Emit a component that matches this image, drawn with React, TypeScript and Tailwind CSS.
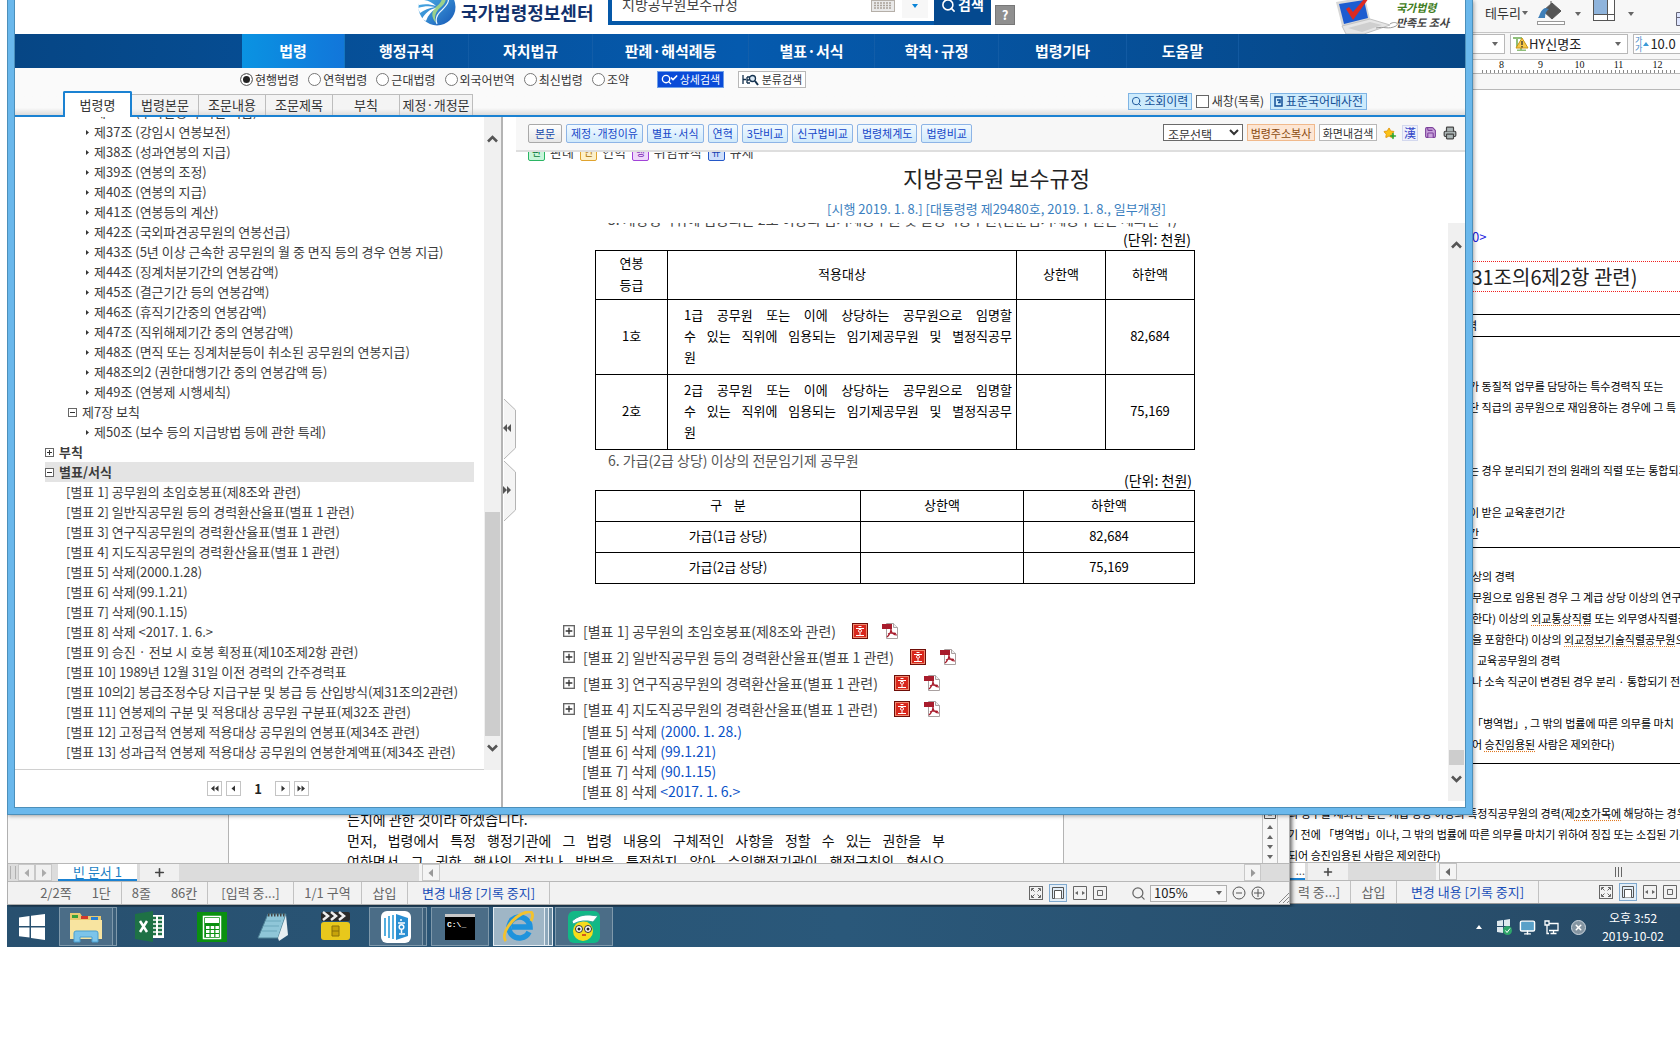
import type { ReactNode } from 'react'
import { Search, Printer, Save, Star, Plus, Check, X, Monitor } from 'lucide-react'

const navItems = [
  { label: '법령', cls: 'w-[103px] bg-linear-to-r from-[#0a93e2] to-[#1276da]' },
  { label: '행정규칙', cls: 'w-[124px]' },
  { label: '자치법규', cls: 'w-[124px]' },
  { label: '판례·해석례등', cls: 'w-[156px]' },
  { label: '별표·서식', cls: 'w-[126px]' },
  { label: '학칙·규정', cls: 'w-[124px]' },
  { label: '법령기타', cls: 'w-[128px]' },
  { label: '도움말', cls: 'w-[112px]' },
]

const scopes = ['현행법령', '연혁법령', '근대법령', '외국어번역', '최신법령', '조약']

const tabs = ['법령본문', '조문내용', '조문제목', '부칙', '제정·개정문']

const articles = [
  '제37조 (강임시 연봉보전)',
  '제38조 (성과연봉의 지급)',
  '제39조 (연봉의 조정)',
  '제40조 (연봉의 지급)',
  '제41조 (연봉등의 계산)',
  '제42조 (국외파견공무원의 연봉선급)',
  '제43조 (5년 이상 근속한 공무원의 월 중 면직 등의 경우 연봉 지급)',
  '제44조 (징계처분기간의 연봉감액)',
  '제45조 (결근기간 등의 연봉감액)',
  '제46조 (휴직기간중의 연봉감액)',
  '제47조 (직위해제기간 중의 연봉감액)',
  '제48조 (면직 또는 징계처분등이 취소된 공무원의 연봉지급)',
  '제48조의2 (권한대행기간 중의 연봉감액 등)',
  '제49조 (연봉제 시행세칙)',
]

const appendices = [
  '[별표 1] 공무원의 초임호봉표(제8조와 관련)',
  '[별표 2] 일반직공무원 등의 경력환산율표(별표 1 관련)',
  '[별표 3] 연구직공무원의 경력환산율표(별표 1 관련)',
  '[별표 4] 지도직공무원의 경력환산율표(별표 1 관련)',
  '[별표 5] 삭제(2000.1.28)',
  '[별표 6] 삭제(99.1.21)',
  '[별표 7] 삭제(90.1.15)',
  '[별표 8] 삭제 <2017. 1. 6.>',
  '[별표 9] 승진 · 전보 시 호봉 획정표(제10조제2항 관련)',
  '[별표 10] 1989년 12월 31일 이전 경력의 간주경력표',
  '[별표 10의2] 봉급조정수당 지급구분 및 봉급 등 산입방식(제31조의2관련)',
  '[별표 11] 연봉제의 구분 및 적용대상 공무원 구분표(제32조 관련)',
  '[별표 12] 고정급적 연봉제 적용대상 공무원의 연봉표(제34조 관련)',
  '[별표 13] 성과급적 연봉제 적용대상 공무원의 연봉한계액표(제34조 관련)',
]

const deleted = [
  { name: '[별표 5] 삭제', date: '(2000. 1. 28.)' },
  { name: '[별표 6] 삭제', date: '(99.1.21)' },
  { name: '[별표 7] 삭제', date: '(90.1.15)' },
  { name: '[별표 8] 삭제', date: '<2017. 1. 6.>' },
]

const lawButtons = ['제정·개정이유', '별표·서식', '연혁', '3단비교', '신구법비교', '법령체계도', '법령비교']

const legend = [
  { mark: '판', text: '판례', cls: 'border-[#2bb564] bg-[#c9f5da] text-[#0d7a3a]' },
  { mark: '연', text: '연혁', cls: 'border-[#e0a32e] bg-[#fdf0c8] text-[#a86c00]' },
  { mark: '행', text: '위임규칙', cls: 'border-[#a143d8] bg-[#eed8fb] text-[#7a1fb0]' },
  { mark: '규', text: '규제', cls: 'border-[#2458c8] bg-[#cfdffb] text-[#1440b0]' },
]

/* ---------- small shared pieces ---------- */

function TreeBox({ open, size = 9 }: { open?: boolean; size?: number }) {
  return (
    <svg width={size} height={size} viewBox="0 0 9 9" className="shrink-0">
      <rect x="0.5" y="0.5" width="8" height="8" fill="#fff" stroke="#666" />
      <path d={open ? 'M2 4.5h5' : 'M2 4.5h5M4.5 2v5'} stroke="#333" />
    </svg>
  )
}

function Chevron({ down }: { down?: boolean }) {
  return (
    <svg width="11" height="9" viewBox="0 0 11 9" className="shrink-0">
      <path d={down ? 'M1 1.5L5.500 6L10 1.500' : 'M1 7.500L5.500 3L10 7.500'} fill="none" stroke="#555" strokeWidth="2.600" />
    </svg>
  )
}

function Tri({ dir, color = '#666' }: { dir: 'left' | 'right' | 'up' | 'down'; color?: string }) {
  const d = { left: 'M6 0v8L1.500 4z', right: 'M2 0v8l4.500-4z', up: 'M1 6h6L4 2z', down: 'M1 2h6L4 6z' }[dir]
  return (
    <svg width="8" height="8" viewBox="0 0 8 8" className="shrink-0">
      <path d={d} fill={color} />
    </svg>
  )
}

function PageButton({ label, d }: { label: string; d: string }) {
  return (
    <button aria-label={label} className="flex h-[15px] w-[15px] items-center justify-center border border-[#c4c4c4] bg-white">
      <svg width="9" height="7" viewBox="0 0 9 7">
        <path d={d} fill="#333" />
      </svg>
    </button>
  )
}

/* ---------- browser: header ---------- */

function SiteHeader() {
  return (
    <header className="flex h-[34px] items-end overflow-hidden pl-[403px]">
      <svg width="38" height="38" viewBox="0 0 38 38" className="mb-[8px] shrink-0">
        <defs>
          <linearGradient id="globe" x1="0" y1="0" x2="1" y2="1">
            <stop offset="0" stopColor="#56c0f0" />
            <stop offset="1" stopColor="#1556b4" />
          </linearGradient>
        </defs>
        <circle cx="19" cy="19" r="18.500" fill="url(#globe)" />
        <path d="M23 0c8 8 5 15 0 19c-6 5-7 10-5 16c-6-7-4-13 1-17c5-4 7-9 4-18z" fill="#9bd08a" />
        <path d="M0 12c8-1 14 2 18 6c-6-2-12-2-17-1zM0 20c6-2 12-2 17-1c-6 1-11 3-15 6zM4 31c3-6 8-10 14-11c-4 3-8 7-10 13z" fill="#fff" />
        <path d="M27 4c7 8 2 13-3 18c-6 5-7 9-5 14" fill="none" stroke="#eaf6ff" strokeWidth="1.200" />
      </svg>
      <span className="mb-[10px] ml-[5px] w-[142px] shrink-0 text-[18px] leading-[24px] font-bold text-[#12316c]">국가법령정보센터</span>
      <div className="mb-[9px] ml-[5px] flex h-[40px] w-[383px] shrink-0 items-stretch border-4 border-r-0 border-[#0558a8] bg-white">
        <input
          aria-label="검색어"
          defaultValue="지방공무원보수규정"
          className="w-[250px] pb-[2px] pl-[10px] text-[14px] text-[#444] outline-none"
        />
        <div className="flex flex-1 items-end pb-[9px] pl-[9px]">
          <svg width="24" height="12" viewBox="0 0 24 12">
            <rect x="0.500" y="0.500" width="23" height="11" fill="#e9e9e9" stroke="#b5afa8" />
            <path d="M3 3h18M3 5.500h18M3 8h18" stroke="#aaa39a" strokeWidth="1.500" strokeDasharray="2 1" />
          </svg>
        </div>
        <button aria-label="자동완성" className="mb-[3px] flex w-[26px] items-end justify-center bg-[#f7f7f7] pb-[8px]">
          <Tri dir="down" color="#0a84d8" />
        </button>
        <button className="-mb-1 ml-[6px] flex w-[57px] items-end justify-center gap-[2px] bg-[#04498f] pb-[12px] text-[14px] leading-[18px] font-bold text-white">
          <Search size={15} strokeWidth={2.500} />
          검색
        </button>
      </div>
      <button className="mb-[9px] ml-[4px] h-[20px] w-[20px] border border-[#777] bg-[#8f8f8f] text-[13px] leading-[18px] font-bold text-white">?</button>
      <div className="mr-[15px] ml-auto flex items-end">
        <svg width="66" height="44" viewBox="0 0 66 44" className="shrink-0">
          <path d="M2 12l29-5l5 22l-28 7z" fill="#d8d8d8" />
          <path d="M5 14l25-4l4 18l-24 6z" fill="#1d5cd0" />
          <path d="M8 36l28-7l20 6l-26 9H12z" fill="#e6e6e6" stroke="#c2c2c2" />
          <path d="M14 38l22-6l12 3l-20 7z" fill="#cfcfcf" />
          <path d="M12 19l7 11l16-22l-4 0l-12 14l-4-5z" fill="#dd2a22" />
          <path d="M42 38c8-2 12 2 20-2c4-3-2-5-6-2" fill="none" stroke="#9a9a9a" />
        </svg>
        <div className="mb-[4px] -ml-[4px] w-[54px] text-[11px] leading-[15px] font-bold italic">
          <div className="text-[#3f7d22]">국가법령</div>
          <div className="whitespace-nowrap text-[#444]">만족도 조사</div>
        </div>
      </div>
    </header>
  )
}

function SiteNav() {
  return (
    <nav className="flex h-[34px] bg-linear-to-r from-[#064685] via-[#055aae] to-[#064685] pl-[227px]">
      {navItems.map((item) => (
        <a
          key={item.label}
          href="#"
          className={`${item.cls} flex items-center justify-center border-r border-[#1a62aa]/60 text-[15px] font-bold text-white`}
        >
          {item.label}
        </a>
      ))}
    </nav>
  )
}

function SearchScope() {
  return (
    <div className="bg-[#fafafa]">
      <div className="flex h-[23px] items-center pl-[225px] text-[12px] text-[#333]">
        <div className="flex gap-[9px]">
          {scopes.map((s, i) => (
            <label key={s} className="flex items-center gap-[2px]">
              <input
                type="radio"
                name="scope"
                defaultChecked={i === 0}
                className="h-[13px] w-[13px] appearance-none rounded-full border border-[#777] bg-white checked:bg-[#222] checked:shadow-[inset_0_0_0_2px_#fff]"
              />
              {s}
            </label>
          ))}
        </div>
        <button className="ml-[28px] flex h-[17px] w-[67px] items-center justify-center gap-[2px] border border-[#6fa0e8] bg-[#0a4bd8] text-[11px] text-white">
          <Search size={11} strokeWidth={3} />
          <Check size={8} strokeWidth={5} className="-ml-[4px] mb-[4px]" />
          상세검색
        </button>
        <button className="ml-[14px] flex h-[17px] w-[68px] items-center justify-center gap-[3px] border border-[#b8b8b8] bg-white text-[11px]">
          <svg width="17" height="12" viewBox="0 0 17 12" fill="none" stroke="#14324f" strokeWidth="1.300">
            <path d="M1 1v9M1 5.500h3M5 3v6M5 3h3M5 6h2M5 9h3" />
            <circle cx="10.500" cy="4.500" r="3" fill="#dbe9f5" />
            <path d="M13 7l3 4" strokeWidth="2" />
          </svg>
          분류검색
        </button>
      </div>
      <div className="flex h-[26px] items-end border-b-2 border-[#1b82d2] bg-linear-to-b from-[#fafafa] from-70% to-[#dcdcdc] pl-[48px] text-[13px] text-[#333]">
        <button className="-mb-[2px] h-[26px] w-[69px] rounded-t-[2px] border-2 border-b-0 border-[#1b82d2] bg-white">법령명</button>
        {tabs.map((t) => (
          <button key={t} className="h-[21px] w-[67px] border border-b-0 border-l-0 border-[#bdbdbd] bg-linear-to-b from-[#f4f4f4] from-70% to-[#dedede] leading-[18px] whitespace-nowrap last-of-type:w-[73px]">
            {t}
          </button>
        ))}
        <div className="mr-[98px] mb-[5px] ml-auto flex items-center gap-[4px] text-[12px]">
          <button className="flex h-[17px] w-[64px] items-center justify-center gap-[2px] border border-[#7fb4e4] bg-[#cdebfc] text-[#134f96]">
            <Search size={11} />
            조회이력
          </button>
          <label className="flex items-center gap-[3px]">
            <input type="checkbox" className="h-[13px] w-[13px] appearance-none border border-[#666] bg-white" />
            새창(목록)
          </label>
          <button className="ml-[2px] flex h-[17px] w-[97px] items-center justify-center gap-[3px] border border-[#7fb4e4] bg-[#cdebfc] text-[#134f96]">
            <svg width="9" height="11" viewBox="0 0 9 11" fill="none" stroke="#134f96" strokeWidth="1.500">
              <path d="M1 1h7v9H1zM3 4h3v2.500H4" />
            </svg>
            표준국어대사전
          </button>
        </div>
      </div>
    </div>
  )
}

/* ---------- browser: article tree ---------- */

function ArticleRow({ text }: { text: string }) {
  return (
    <li className="flex h-[20px] shrink-0 items-center gap-[5px] pl-[71px] whitespace-nowrap">
      <svg width="3" height="5" viewBox="0 0 3 5" className="shrink-0">
        <path d="M0 0l3 2.500l-3 2.500z" fill="#333" />
      </svg>
      <a href="#">{text}</a>
    </li>
  )
}

function LawTree() {
  return (
    <aside className="flex w-[488px] shrink-0 flex-col border-r-2 border-[#b4b4b4] text-[13px] text-[#3c3c3c]">
      <div className="flex min-h-0 flex-1">
        <ul className="flex min-w-0 flex-1 flex-col justify-end overflow-hidden border-b border-[#d0d0d0] pb-[7px] leading-[20px]">
          <ArticleRow text="제36조 (수사관등의 의한 지급)" />
          {articles.map((a) => <ArticleRow key={a} text={a} />)}
          <li className="flex h-[20px] shrink-0 items-center gap-[5px] pl-[53px]"><TreeBox open />제7장 보칙</li>
          <ArticleRow text="제50조 (보수 등의 지급방법 등에 관한 특례)" />
          <li className="flex h-[20px] shrink-0 items-center gap-[5px] pl-[30px] font-bold"><TreeBox />부칙</li>
          <li className="mr-[10px] ml-[30px] flex h-[20px] shrink-0 items-center gap-[5px] bg-[#e4e4e4] font-bold"><TreeBox open />별표/서식</li>
          {appendices.map((a) => (
            <li key={a} className="h-[20px] shrink-0 pl-[51px] whitespace-nowrap"><a href="#">{a}</a></li>
          ))}
        </ul>
        <div className="flex w-[17px] flex-col items-center bg-[#f0f0f0] pt-[17px] pb-[17px]">
          <Chevron />
          <div className="mt-auto mb-[8px] h-[224px] w-[15px] bg-[#cdcdcd]" />
          <Chevron down />
        </div>
      </div>
      <div className="flex h-[37px] items-center justify-center gap-[4px]">
        <PageButton label="처음" d="M4.500 0.500v6L1 3.500zM8.500 0.500v6L5 3.500z" />
        <PageButton label="이전" d="M6 0.500v6L2.500 3.500z" />
        <span className="w-[26px] text-center font-bold text-[#222]">1</span>
        <PageButton label="다음" d="M3.500 0.500v6L7 3.500z" />
        <PageButton label="마지막" d="M0.500 0.500v6L4 3.500zM4.500 0.500v6L8 3.500z" />
      </div>
    </aside>
  )
}

/* ---------- browser: law text ---------- */

function LawToolbar() {
  return (
    <div className="flex h-[35px] shrink-0 items-start border-b-2 border-[#dedede] bg-[#f7f7f7] pt-[7px] pl-[12px] text-[11px]">
      <div className="flex gap-[4px]">
        <button className="h-[19px] w-[34px] rounded-[2px] border border-[#a9a9a9] bg-linear-to-b from-white to-[#e6e6e6] text-[#1547a8]">본문</button>
        {lawButtons.map((b) => (
          <button key={b} className="h-[19px] rounded-[2px] border border-[#8db4e6] bg-linear-to-b from-[#f2faff] to-[#cfe9fb] px-[4px] whitespace-nowrap text-[#1547c8]">
            {b}
          </button>
        ))}
      </div>
      <div className="mr-[8px] ml-auto flex items-center gap-[4px]">
        <select aria-label="조문선택" className="h-[17px] w-[80px] border border-[#6a6a6a] bg-white text-[12px] leading-[14px] text-[#333]">
          <option>조문선택</option>
        </select>
        <button className="h-[17px] w-[68px] border border-[#f0b98c] bg-[#fde6d4] text-[#8a4a10]">법령주소복사</button>
        <button className="h-[17px] w-[58px] border border-[#b8b8b8] bg-white whitespace-nowrap text-[#333]">화면내검색</button>
        <button aria-label="관심법령" className="relative ml-[2px] h-[14px] w-[14px]">
          <Star size={12} fill="#fbc318" stroke="#e49a10" />
          <Plus size={8} strokeWidth={5} stroke="#2da52d" className="absolute right-0 bottom-0" />
        </button>
        <button className="ml-[1px] h-[16px] w-[16px] border border-[#d3d8ee] bg-[#eef0fb] text-[12px] leading-[14px] text-[#3347c8]">漢</button>
        <button aria-label="저장" className="ml-[2px]"><Save size={13} fill="#c9a3dc" stroke="#7b3f9a" /></button>
        <button aria-label="인쇄" className="ml-[2px]"><Printer size={14} fill="#aab4b4" stroke="#444" /></button>
      </div>
    </div>
  )
}

const cell = 'border border-black pb-[3px]'

function SalaryTables() {
  return (
    <div className="ml-[79px] w-[599px] text-[13px] text-black">
      <div className="flex h-[6px] items-end overflow-hidden pl-[13px] text-[14px] leading-[20px] whitespace-nowrap text-[#444]">
        5. 개방형직위에 임용되는 2호 이상의 임기제공무원 및 별정직공무원(전문임기제공무원은 제외한다)
      </div>
      <div className="h-[21px] pr-[3px] text-right text-[14px] leading-[20px]">(단위: 천원)</div>
      <table className="w-full table-fixed border-collapse text-center">
        <colgroup>
          <col className="w-[72px]" />
          <col className="w-[349px]" />
          <col className="w-[89px]" />
          <col className="w-[89px]" />
        </colgroup>
        <tbody>
          <tr className="h-[49px] leading-[22px]">
            <th className={`${cell} font-normal`}>연봉<br />등급</th>
            <th className={`${cell} font-normal`}>적용대상</th>
            <th className={`${cell} font-normal`}>상한액</th>
            <th className={`${cell} font-normal`}>하한액</th>
          </tr>
          {[{ n: 1, min: '82,684' }, { n: 2, min: '75,169' }].map((r) => (
            <tr key={r.n} className="h-[75px] leading-[21px]">
              <td className={cell}>{r.n}호</td>
              <td className={`${cell} pr-[4px] pl-[16px] text-left whitespace-nowrap`}>
                <p className="[text-align-last:justify]">{r.n}급 공무원 또는 이에 상당하는 공무원으로 임명할</p>
                <p className="[text-align-last:justify]">수 있는 직위에 임용되는 임기제공무원 및 별정직공무</p>
                <p>원</p>
              </td>
              <td className={cell} />
              <td className={cell}>{r.min}</td>
            </tr>
          ))}
        </tbody>
      </table>
      <p className="h-[22px] pl-[13px] text-[14px] leading-[21px] text-[#555]">6. 가급(2급 상당) 이상의 전문임기제 공무원</p>
      <div className="h-[18px] pr-[2px] text-right text-[14px] leading-[16px]">(단위: 천원)</div>
      <table className="w-full table-fixed border-collapse text-center">
        <colgroup>
          <col className="w-[265px]" />
          <col className="w-[163px]" />
          <col className="w-[171px]" />
        </colgroup>
        <tbody>
          <tr className="h-[31px]">
            <th className={`${cell} font-normal whitespace-pre`}>구{'    '}분</th>
            <th className={`${cell} font-normal`}>상한액</th>
            <th className={`${cell} font-normal`}>하한액</th>
          </tr>
          <tr className="h-[31px]"><td className={cell}>가급(1급 상당)</td><td className={cell} /><td className={cell}>82,684</td></tr>
          <tr className="h-[31px]"><td className={cell}>가급(2급 상당)</td><td className={cell} /><td className={cell}>75,169</td></tr>
        </tbody>
      </table>
    </div>
  )
}

function HwpIcon() {
  return (
    <svg width="16" height="16" viewBox="0 0 16 16">
      <rect x="0.500" y="0.500" width="15" height="15" fill="#d8261c" stroke="#6e0d08" />
      <rect x="1.500" y="1.500" width="13" height="13" fill="none" stroke="#f08a70" />
      <path d="M6.500 3.500h3M4 5.500h8" stroke="#fff" />
      <circle cx="8" cy="7.800" r="1.500" fill="none" stroke="#fff" />
      <path d="M8 10v2.500M4 12.500h8" stroke="#fff" />
    </svg>
  )
}

function PdfIcon() {
  return (
    <svg width="16" height="16" viewBox="0 0 16 16">
      <path d="M4.500 0.500h7l4 4v11h-11z" fill="#fff" stroke="#a9a0a0" />
      <path d="M11.500 0.500v4h4" fill="#eee" stroke="#a9a0a0" />
      <rect x="0" y="1" width="10" height="5" fill="#a81c2c" />
      <path d="M9 5c0 4-1.500 7-4 9M9 6c0 4 3 6 6 6M6 11c3-1.500 5-1.500 8-0.500" fill="none" stroke="#a81c2c" strokeWidth="1.200" />
    </svg>
  )
}

function LawText() {
  return (
    <main className="flex min-w-0 flex-1 flex-col">
      <LawToolbar />
      <div className="flex h-[10px] shrink-0 items-end overflow-hidden pl-[12px] text-[13px] leading-[20px] text-[#444]">
        {legend.map((l) => (
          <span key={l.text} className="mr-[6px] flex items-center gap-[5px]">
            <i className={`${l.cls} h-[17px] w-[17px] rounded-[2px] border text-center text-[10px] leading-[14px] not-italic`}>{l.mark}</i>
            {l.text}
          </span>
        ))}
      </div>
      <div className="shrink-0 pl-[12px] text-center">
        <h1 className="h-[32px] text-[22px] leading-[30px] text-[#222]">지방공무원 보수규정</h1>
        <p className="h-[29px] pt-[4px] text-[13px] leading-[22px] text-[#3c7fc0]">[시행 2019. 1. 8.] [대통령령 제29480호, 2019. 1. 8., 일부개정]</p>
      </div>
      <div className="flex min-h-0 flex-1">
        <div className="min-w-0 flex-1 overflow-hidden">
          <SalaryTables />
          <ul className="mt-[34px] ml-[47px] text-[14px] text-[#444]">
            {appendices.slice(0, 4).map((a) => (
              <li key={a} className="flex h-[26px] items-center whitespace-nowrap">
                <TreeBox size={12} />
                <a href="#" className="mr-[16px] ml-[8px]">{a}</a>
                <a href="#" aria-label="한글 파일" className="mr-[14px]"><HwpIcon /></a>
                <a href="#" aria-label="PDF 파일"><PdfIcon /></a>
              </li>
            ))}
            {deleted.map((d) => (
              <li key={d.name} className="h-[20px] pl-[19px] leading-[18px]">
                {d.name} <span className="text-[#0a52c8]">{d.date}</span>
              </li>
            ))}
          </ul>
        </div>
        <div className="mb-[6px] flex w-[17px] flex-col items-center bg-[#f0f0f0] pt-[17px] pb-[17px]">
          <Chevron />
          <div className="mt-auto mb-[10px] h-[15px] w-[15px] bg-[#cdcdcd]" />
          <Chevron down />
        </div>
      </div>
    </main>
  )
}

function Splitter() {
  return (
    <div className="flex w-[13px] shrink-0 flex-col gap-[2px] pt-[282px]">
      {['M4 25v8L0 29zM8 25v8L4 29z', 'M0 25v8l4-4zM4 25v8l4-4z'].map((d) => (
        <svg key={d} width="13" height="60" viewBox="0 0 13 60">
          <path d="M1 0L12.500 11V49L1 60" fill="#f4f4f4" stroke="#b4b4b4" />
          <path d={d} fill="#555" />
        </svg>
      ))}
    </div>
  )
}

function BrowserWindow() {
  return (
    <div className="absolute top-0 right-[207px] bottom-[92px] left-0 flex flex-col border border-t-0 border-[#4c8fba] bg-[#6ab8ec] px-[6px] pb-[6px] shadow-[1px_1px_4px_rgba(0,0,0,0.35)]">
      <div className="flex min-h-0 flex-1 flex-col border border-t-0 border-[#4c8fba] bg-white">
        <SiteHeader />
        <SiteNav />
        <SearchScope />
        <div className="flex min-h-0 flex-1">
          <LawTree />
          <Splitter />
          <LawText />
        </div>
      </div>
    </div>
  )
}

/* ---------- word processor windows ---------- */

function ViewIcons() {
  return (
    <div className="flex items-center gap-[6px]">
      <svg width="14" height="14" viewBox="0 0 14 14" fill="none" stroke="#666">
        <rect x="0.500" y="0.500" width="13" height="13" />
        <path d="M2.500 5V2.500H5M9 2.500h2.500V5M11.500 9v2.500H9M5 11.500H2.500V9M3 3l2.500 2.500M11 3L8.500 5.500M11 11L8.500 8.500M3 11l2.500-2.500" />
      </svg>
      <svg width="18" height="18" viewBox="0 0 18 18" fill="none">
        <rect x="0.500" y="0.500" width="17" height="17" fill="#e3eef8" stroke="#7fa9cf" />
        <path d="M3.500 3.500h11v11h-11z" stroke="#555" />
        <path d="M5.500 14.500v-8h7v8" fill="#fff" stroke="#555" />
      </svg>
      <svg width="14" height="14" viewBox="0 0 14 14" fill="none" stroke="#666">
        <path d="M0.500 0.500h13v13h-13z" />
        <path d="M2 7l3-2v4zM12 7l-3-2v4z" fill="#666" stroke="none" />
      </svg>
      <svg width="14" height="14" viewBox="0 0 14 14" fill="none" stroke="#666">
        <path d="M0.500 0.500h13v13h-13zM4.500 4.500h5v5h-5z" />
      </svg>
    </div>
  )
}

function Status({ children, cls }: { children: ReactNode; cls: string }) {
  return <span className={`${cls} flex items-center justify-center border-r border-[#c2c2c2] whitespace-nowrap`}>{children}</span>
}

const mark = 'underline decoration-dotted decoration-[#e07820] underline-offset-2'

function ReferenceWindow() {
  return (
    <div className="absolute top-0 right-0 bottom-[3px] flex w-[392px] flex-col border-b border-[#999] bg-white text-[11px] text-black">
      {/* tool ribbon, mostly behind the browser */}
      <div className="flex h-[32px] shrink-0 items-end bg-[#f7f7f7] pb-[10px] pl-[197px] text-[13px] leading-[18px] text-[#333]">
        <button className="flex items-center whitespace-nowrap">테두리<Tri dir="down" /></button>
        <svg width="28" height="28" viewBox="0 0 28 28" className="-mb-[4px] ml-[8px] shrink-0">
          <path d="M14 3v8M6 13l9-8l9 8l-9 8z" fill="#555" stroke="#555" />
          <path d="M8 10c-5 2-5 8-7 10h7c0-4 1-7 4-9z" fill="#3f7fb8" />
          <rect x="0.500" y="23.500" width="27" height="3" fill="#fff" stroke="#999" />
        </svg>
        <span className="mr-[6px] mb-[4px] ml-[9px]"><Tri dir="down" /></span>
        <svg width="22" height="24" viewBox="0 0 22 24" className="ml-[5px] shrink-0">
          <rect x="0.500" y="0.500" width="21" height="22" fill="#fff" stroke="#555" />
          <rect x="1" y="1" width="13" height="15" fill="#8fb4dc" />
          <path d="M14.500 0v23M0 16.500h22" stroke="#555" />
        </svg>
        <span className="mx-[12px] mb-[4px]"><Tri dir="down" /></span>
        <span className="-mb-[7px] h-[30px] w-px bg-[#c2c2c2]" />
        <svg width="24" height="14" viewBox="0 0 24 14" className="-mb-[4px] ml-[29px] shrink-0">
          <path d="M0.500 0.500h22v13h-22zM0 5.500h23" fill="#dfe6ff" stroke="#667" />
        </svg>
      </div>
      <div className="flex h-[28px] shrink-0 items-center gap-[5px] overflow-hidden border-y border-[#c6c6c6] bg-[#f7f7f7] pb-[4px] pl-[180px] text-[13px] text-[#222]">
        <button aria-label="스타일" className="flex h-[20px] w-[37px] shrink-0 items-center justify-end border border-[#b8b8b8] bg-white pr-[5px]"><Tri dir="down" /></button>
        <button className="flex h-[20px] w-[118px] shrink-0 items-center border border-[#b8b8b8] bg-white px-[2px]">
          <svg width="16" height="14" viewBox="0 0 16 14">
            <path d="M0 1h9M4 1v9M8 11v3M4 13.500h9" stroke="#8fbf7a" strokeWidth="2" />
            <path d="M9 1l6 10H3z" fill="#f7c948" stroke="#c99612" />
            <path d="M9 4v4M9 9v1.500" stroke="#333" strokeWidth="1.300" />
          </svg>
          HY신명조
          <span className="mr-[3px] ml-auto"><Tri dir="down" /></span>
        </button>
        <button className="flex h-[20px] w-[47px] shrink-0 items-center border border-r-0 border-[#b8b8b8] bg-white pl-[1px]">
          <span className="text-[8px] leading-[8px] text-[#3a82c4]">가<br />가</span>
          <Tri dir="up" color="#3a9ad8" />
          10.0
        </button>
      </div>
      <div className="flex h-[14px] shrink-0 items-start border-b border-[#b8b8b8] bg-white pl-[194px]">
        {[8, 9, 10, 11, 12].map((n) => (
          <span key={n} className="relative h-[13px] w-[39px] shrink-0 text-center font-[Liberation_Serif,serif] text-[10px] leading-[10px] text-[#111]">
            {n}
            <svg width="39" height="4" viewBox="0 0 39 4" className="absolute bottom-0 left-0">
              <path d="M0 2.500h39" stroke="#888" strokeWidth="3" strokeDasharray="1 3" />
            </svg>
          </span>
        ))}
      </div>
      <div className="h-[16px] shrink-0 border-b border-[#b8b8b8] bg-[#f7f7f7]" />

      <div className="min-h-0 flex-1 overflow-hidden leading-[21px] whitespace-nowrap">
        <div className="pt-[136px] pl-[184px] text-[13px] text-[#2222e0]">0&gt;</div>
        <div className="mt-[14px] border-y border-dotted border-[#f02020] pl-[165px] text-[20px] leading-[29px] text-[#222]">제31조의6제2항 관련)</div>
        <div className="mt-[22px] border-y border-black pl-[179px]">력</div>
        <div className="border-b border-black pt-[39px] pb-[3px] pl-[181px]">
          <p>가 동질적 업무를 담당하는 특수경력직 또는</p>
          <p>단 직급의 공무원으로 재임용하는 경우에 그 특</p>
          <br />
          <br />
          <p>는 경우 분리되기 전의 원래의 직렬 또는 통합되기</p>
          <br />
          <p>이 받은 교육훈련기간</p>
          <p>간</p>
        </div>
        <div className="border-b border-black pt-[18px] pb-[8px] pl-[184px]">
          <p>상의 경력</p>
          <p>무원으로 임용된 경우 그 계급 상당 이상의 연구직공</p>
          <p>한다) 이상의 <span className={mark}>외교통상직렬</span> 또는 외무영사직렬공</p>
          <p>을 포함한다) 이상의 <span className={mark}>외교정보기술직렬공무원</span>으</p>
          <p className="pl-[5px]">교육공무원의 경력</p>
          <p>나 소속 직군이 변경된 경우 분리 · 통합되기 전 또</p>
          <br />
          <p>「병역법」, 그 밖의 법률에 따른 의무를 마치</p>
          <p>어 <span className={mark}>승진임용된</span> 사람은 제외한다)</p>
        </div>
        <div className="pt-[39px]">
          <p>의 경우를 제외한 같은 계급 상당 이상의 특정직공무원의 경력(제<span className={mark}>2호가목에</span> 해당하는 경우</p>
          <p>기 전에 「병역법」이나, 그 밖의 법률에 따른 의무를 마치기 위하여 징집 또는 소집된 기간</p>
          <p>되어 <span className={mark}>승진임용된</span> 사람은 제외한다)</p>
        </div>
      </div>

      <div className="flex h-[18px] shrink-0 items-stretch border-t border-[#b8b8b8] bg-[#dcdcdc]">
        <span className="w-[17px] border-b-2 border-[#1b82d2] bg-white text-right leading-[14px] text-[#555]">...</span>
        <button aria-label="새 탭" className="ml-[3px] flex w-[40px] items-center justify-center bg-[#f0f0f0]"><Plus size={12} strokeWidth={3} stroke="#444" /></button>
        <span className="ml-[88px] w-[3px] bg-[#f4f4f4]" />
        <button aria-label="왼쪽" className="flex w-[18px] items-center justify-center border border-[#c2c2c2] bg-[#f4f4f4]"><Tri dir="left" /></button>
        <div className="flex flex-1 items-center justify-center gap-[2px] bg-[#f0f0f0] pl-[100px]">
          <i className="h-[10px] w-px bg-[#666]" /><i className="h-[10px] w-px bg-[#666]" /><i className="h-[10px] w-px bg-[#666]" />
        </div>
      </div>
      <div className="flex h-[23px] shrink-0 border-t border-[#b8b8b8] bg-[#f2f2f2] text-[13px] text-[#666]">
        <Status cls="w-[63px]">력 중...]</Status>
        <Status cls="w-[46px]">삽입</Status>
        <Status cls="w-[142px] text-[#1b50b8]">변경 내용 [기록 중지]</Status>
        <div className="ml-auto flex pr-[3px]"><ViewIcons /></div>
      </div>
    </div>
  )
}

function DraftWindow() {
  return (
    <div className="absolute right-[390px] bottom-[2px] left-0 flex h-[110px] flex-col border border-[#b0b0b0] bg-[#f7f7f7] shadow-[2px_1px_4px_rgba(0,0,0,0.6)]">
      <div className="flex min-h-0 flex-1 overflow-hidden">
        <div className="w-[221px] shrink-0 border-r border-[#b4b4b4]" />
        <div className="flex min-w-0 flex-1 flex-col bg-white pt-[13px] pl-[118px] text-[14px] leading-[21px] whitespace-nowrap text-[#111]">
          <p className="w-[598px]">는지에 관한 것이라 하겠습니다.</p>
          <p className="w-[598px] shrink-0 [text-align-last:justify]">먼저, 법령에서 특정 행정기관에 그 법령 내용의 구체적인 사항을 정할 수 있는 권한을 부</p>
          <p className="w-[598px] shrink-0 [text-align-last:justify]">여하면서 그 권한 행사의 절차나 방법을 특정하지 않아 수임행정기관이 행정규칙의 형식으</p>
        </div>
        <div className="w-[199px] shrink-0 border-l border-[#b4b4b4]" />
        <div className="mr-[11px] flex w-[16px] shrink-0 flex-col items-center justify-end gap-[2px] border-x border-[#c2c2c2] pb-[2px]">
          <svg width="12" height="12" viewBox="0 0 12 12" fill="none" stroke="#555" className="mb-[2px] shrink-0"><path d="M0.500 0.500h11v11h-11zM4 4h4v4H4z" /></svg>
          <Tri dir="up" /><Tri dir="up" /><Tri dir="down" /><Tri dir="down" />
        </div>
      </div>
      <div className="flex h-[18px] shrink-0 items-stretch border-t border-[#b8b8b8] bg-[#dcdcdc] text-[13px]">
        <span className="m-[2px] w-[6px] border-x border-[#b0b0b0]" />
        <button aria-label="이전 탭" className="flex w-[17px] items-center justify-center border border-[#c8c8c8] bg-[#f0f0f0]"><Tri dir="left" color="#aaa" /></button>
        <button aria-label="다음 탭" className="flex w-[17px] items-center justify-center border border-[#c8c8c8] bg-[#f0f0f0]"><Tri dir="right" color="#aaa" /></button>
        <button className="ml-[6px] w-[79px] border-b-2 border-[#1b82d2] bg-white leading-[12px] text-[#1b7fc4]">빈 문서 1</button>
        <button aria-label="새 탭" className="ml-[3px] flex w-[39px] items-center justify-center bg-[#f0f0f0]"><Plus size={13} strokeWidth={3} stroke="#444" /></button>
        <span className="ml-[240px] w-[3px] bg-[#f4f4f4]" />
        <button aria-label="왼쪽" className="flex w-[18px] items-center justify-center border border-[#c8c8c8] bg-[#f4f4f4]"><Tri dir="left" color="#999" /></button>
        <div className="flex-1 bg-[#f0f0f0]" />
        <button aria-label="오른쪽" className="flex w-[17px] items-center justify-center border border-[#c8c8c8] bg-[#f4f4f4]"><Tri dir="right" color="#999" /></button>
        <span className="mr-[11px] w-[17px]" />
      </div>
      <div className="flex h-[23px] shrink-0 items-stretch border-t border-[#b8b8b8] bg-[#f2f2f2] text-[13px] text-[#666]">
        <Status cls="w-[114px] gap-[20px] pl-[22px]"><span>2/2쪽</span><span>1단</span></Status>
        <Status cls="w-[86px] gap-[20px]"><span>8줄</span><span>86칸</span></Status>
        <Status cls="w-[86px]">[입력 중...]</Status>
        <Status cls="w-[68px]">1/1 구역</Status>
        <Status cls="w-[46px]">삽입</Status>
        <Status cls="w-[142px] text-[#1b50b8]">변경 내용 [기록 중지]</Status>
        <div className="ml-auto flex items-center">
          <ViewIcons />
          <Search size={15} className="mr-[4px] ml-[24px]" />
          <button className="flex h-[17px] w-[77px] items-center justify-between border border-[#b0b0b0] bg-[#f7f7f7] px-[3px] text-[#222]">105%<Tri dir="down" /></button>
          <svg width="33" height="14" viewBox="0 0 33 14" fill="none" stroke="#555" className="ml-[5px]">
            <circle cx="7" cy="7" r="6" /><path d="M4 7h6M22 7h8M26 3v8" /><circle cx="26" cy="7" r="6" />
          </svg>
          <svg width="10" height="10" viewBox="0 0 10 10" stroke="#888" className="mt-[10px] ml-[14px]"><path d="M0 10L10 0M4 10l6-6M8 10l2-2" /></svg>
        </div>
      </div>
    </div>
  )
}

/* ---------- taskbar ---------- */

function TaskButton({ label, active, stack, cls, children }: { label: string; active?: boolean; stack?: boolean; cls: string; children: ReactNode }) {
  return (
    <div className={`${cls} flex h-[39px]`}>
      <button
        aria-label={label}
        className={`flex flex-1 items-center justify-center border ${active ? 'border-[#e4ecf2] bg-[#9fb6c6]' : 'border-[#7f99ab] bg-[#4b6d87]'}`}
      >
        {children}
      </button>
      {stack && <span className={`w-[4px] border border-l-0 ${active ? 'border-[#e4ecf2] bg-[#8da8bb]' : 'border-[#7f99ab] bg-[#3b5f7a]'}`} />}
      {stack && active && <span className="w-[4px] border border-l-0 border-[#e4ecf2] bg-[#6b8ba0]" />}
    </div>
  )
}

function Taskbar() {
  return (
    <footer className="relative flex h-[40px] items-start bg-linear-to-r from-[#28506f] via-[#2a587a] to-[#274a66]">
      <button aria-label="시작" className="mt-[7px] ml-[12px]">
        <svg width="26" height="26" viewBox="0 0 26 26" fill="#fff">
          <path d="M0 3.500L10.500 2v10H0zM12 1.800L26 0v12H12zM0 13.500h10.500v10L0 22.200zM12 13.500h14V26l-14-2z" />
        </svg>
      </button>
      <TaskButton label="탐색기" stack cls="ml-[14px] w-[58px]">
        <svg width="34" height="32" viewBox="0 0 34 32">
          <path d="M1 2h10l2 3h19v22H1z" fill="#e9c96f" />
          <path d="M3 4h6v3H3z" fill="#3aa03a" /><path d="M12 5h7v3h-7z" fill="#d23a2a" /><path d="M22 6h7v3h-7z" fill="#2a7fd2" />
          <path d="M1 9h32v19H1z" fill="#f8e4a0" />
          <path d="M5 31v-9q0-2 2-2h20q2 0 2 2v9h-6v-5H11v5z" fill="#7cc4ea" stroke="#4a9fd0" />
        </svg>
      </TaskButton>
      <button aria-label="Excel" className="mt-[4px] ml-[18px]">
        <svg width="30" height="31" viewBox="0 0 30 31">
          <rect x="14" y="4" width="15" height="23" fill="#fff" />
          <path d="M18 7h3M18 11h3M18 15h3M18 19h3M18 23h3M23 7h4M23 11h4M23 15h4M23 19h4M23 23h4" stroke="#1e7145" strokeWidth="2.500" />
          <path d="M0 3l18-3v31L0 28z" fill="#1e7145" />
          <path d="M5 10l7 11M12 10L5 21" stroke="#fff" strokeWidth="2.500" />
        </svg>
      </button>
      <button aria-label="계산기" className="mt-[5px] ml-[32px]">
        <svg width="30" height="30" viewBox="0 0 30 30">
          <rect width="30" height="30" fill="#0a9010" />
          <rect x="6.500" y="4.500" width="17" height="22" fill="none" stroke="#fff" strokeWidth="1.500" />
          <rect x="8" y="6" width="14" height="5" fill="#fff" />
          <path d="M9 15.500h13M9 19.500h13M9 23.500h13" stroke="#fff" strokeWidth="3" strokeDasharray="3.500 1.200" />
        </svg>
      </button>
      <button aria-label="메모장" className="mt-[5px] ml-[30px]">
        <svg width="32" height="30" viewBox="0 0 32 30">
          <path d="M11 2h18l-8 24H1z" fill="#8fc6d8" stroke="#4f8296" />
          <path d="M29 3l2 20l-9 6l-1-3z" fill="#e8eff2" />
          <path d="M11 3h18" stroke="#444" strokeWidth="3" strokeDasharray="1.500 1.500" />
          <path d="M9 9h15M7 14h15M5 19h15" stroke="#5d9cb2" strokeWidth="0.700" />
        </svg>
      </button>
      <button aria-label="동영상" className="mt-[4px] ml-[31px]">
        <svg width="31" height="30" viewBox="0 0 31 30">
          <rect x="1" y="1" width="29" height="9" rx="2" fill="#2a2a2a" />
          <path d="M3 1l5 4l-5 4M11 1l5 4l-5 4M19 1l5 4l-5 4" fill="none" stroke="#eee" strokeWidth="2.500" />
          <rect x="1" y="11" width="29" height="18" rx="3" fill="#e8c81c" />
          <path d="M12 15h7v10h-7zM12 20h7" fill="#c7a30a" stroke="#8a7008" />
        </svg>
      </button>
      <TaskButton label="한글" stack cls="ml-[18px] w-[58px]">
        <svg width="30" height="32" viewBox="0 0 30 32">
          <rect width="30" height="32" rx="6" fill="#fff" />
          <path d="M4 7v18M8 5v22M12 4v24" stroke="#2a9ad8" strokeWidth="1.600" />
          <path d="M15 3l12 4v18l-12 4z" fill="#2a8fd2" />
          <path d="M20 8v2M17 12h7M18 23h6M20.500 19v3" stroke="#fff" strokeWidth="1.500" />
          <circle cx="20.500" cy="16" r="2.300" fill="none" stroke="#fff" strokeWidth="1.500" />
        </svg>
      </TaskButton>
      <TaskButton label="명령 프롬프트" cls="ml-[4px] w-[58px]">
        <span className="h-[26px] w-[30px] border-t-[3px] border-[#c8c8c8] bg-black pt-[3px] pl-[2px] text-left font-[Liberation_Mono,monospace] text-[8px] leading-[9px] font-bold text-white">C:\_</span>
      </TaskButton>
      <TaskButton label="Internet Explorer" active stack cls="ml-[4px] w-[60px]">
        <svg width="32" height="32" viewBox="0 0 32 32" fill="none">
          <path d="M26 21a10.500 10.500 0 1 1 1-5H9" stroke="#1f93dc" strokeWidth="5.500" />
          <path d="M3 30C-3 24 9 5 24 1c7-2 6 5 4 9" stroke="#f2c230" strokeWidth="3" />
        </svg>
      </TaskButton>
      <TaskButton label="메신저" cls="ml-[2px] w-[58px]">
        <svg width="32" height="32" viewBox="0 0 32 32">
          <rect width="32" height="32" rx="6" fill="#12b886" />
          <circle cx="15" cy="20" r="10" fill="#f7dc1c" />
          <path d="M4 10q8-7 18-6l8 1l-5 6q-10-3-20 2z" fill="#fff" stroke="#2aa890" />
          <circle cx="11" cy="18" r="3.500" fill="#fff" stroke="#333" /><circle cx="20" cy="18" r="3.500" fill="#fff" stroke="#333" />
          <circle cx="11" cy="18" r="1.500" fill="#222" /><circle cx="20" cy="18" r="1.500" fill="#222" />
          <path d="M14 24h4" stroke="#d25a1c" strokeWidth="2" />
        </svg>
      </TaskButton>
      <div className="ml-auto flex h-full items-center text-white">
        <Tri dir="up" color="#fff" />
        <svg width="16" height="16" viewBox="0 0 16 16" className="ml-[13px]">
          <path d="M1 2l6-1v6H1zM8 1l6-1v7H8zM1 8h6v6l-6-1zM8 8h6v6l-6 0z" fill="#dfe9ee" />
          <circle cx="11.500" cy="11.500" r="4.500" fill="#2fa66a" /><path d="M9.500 11.500l1.500 2l3-4" stroke="#fff" fill="none" />
        </svg>
        <Monitor size={17} fill="#5aa0c8" className="ml-[7px]" />
        <svg width="15" height="15" viewBox="0 0 15 15" fill="none" stroke="#fff" strokeWidth="1.300" className="ml-[8px]">
          <path d="M5 3.500h9v7H5M9.500 10.500v3M6.500 13.500h6M1 1h4v4H1zM3 5v8.500h2" />
        </svg>
        <span className="ml-[12px] flex h-[15px] w-[15px] items-center justify-center rounded-full border border-[#ccd6de] bg-[#8495a2]"><X size={9} strokeWidth={4} /></span>
        <div className="mr-[12px] ml-[12px] w-[70px] text-center text-[12px] leading-[18px] whitespace-nowrap">
          오후 3:52<br />2019-10-02
        </div>
      </div>
    </footer>
  )
}

export default function App() {
  return (
    <div className="min-h-screen w-full overflow-hidden bg-white pl-[7px] [font-family:'Noto_Sans_CJK_KR',sans-serif]">
      <div className="relative h-[907px] overflow-hidden bg-[#28506f]">
        <ReferenceWindow />
        <DraftWindow />
        <BrowserWindow />
      </div>
      <Taskbar />
    </div>
  )
}
